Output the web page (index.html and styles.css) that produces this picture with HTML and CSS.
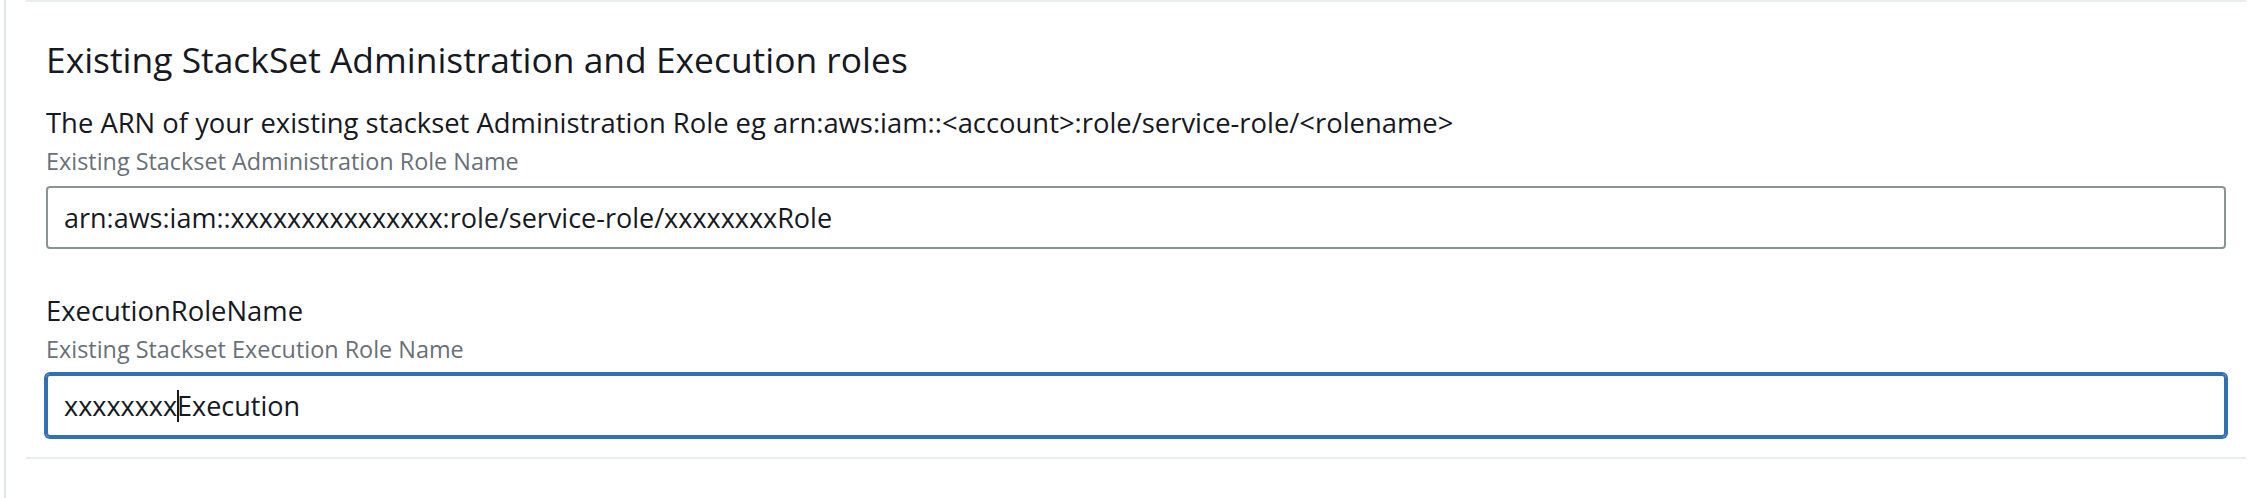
FILE: index.html
```html
<!DOCTYPE html>
<html lang="en">
<head>
<meta charset="utf-8">
<title>Existing StackSet Administration and Execution roles</title>
<link rel="stylesheet" href="styles.css">
</head>
<body>
<div class="page">
  <section class="panel">
    <h2 class="panel-title">Existing StackSet Administration and Execution roles</h2>
    <div class="field">
      <div class="field-label">The ARN of your existing stackset Administration Role eg arn:aws:iam::&lt;account&gt;:role/service-role/&lt;rolename&gt;</div>
      <div class="field-desc">Existing Stackset Administration Role Name</div>
      <div class="text-input">arn:aws:iam::xxxxxxxxxxxxxxx:role/service-role/xxxxxxxxRole</div>
    </div>
    <div class="field field-next">
      <div class="field-label">ExecutionRoleName</div>
      <div class="field-desc">Existing Stackset Execution Role Name</div>
      <div class="text-input is-focused">xxxxxxxx<span class="caret"></span>Execution</div>
    </div>
  </section>
</div>
</body>
</html>
```
FILE: styles.css
```css
html, body {
  margin: 0;
  padding: 0;
  background: #ffffff;
}

body {
  font-family: "Open Sans", "Noto Sans", sans-serif;
  color: #16191f;
}

.page {
  margin-left: 4px;
  border-left: 2px solid #e1e4e6;
  min-height: 498px;
  box-sizing: border-box;
  padding-left: 20px;
  padding-right: 16px;
}

.panel {
  border-top: 2px solid #eaeded;
  border-bottom: 2px solid #eaeded;
  padding: 35px 20px 20px 20px;
}

.panel-title {
  margin: 0;
  font-size: 35.4px;
  line-height: 44px;
  font-weight: 400;
  color: #16191f;
}

.field {
  margin-top: 25px;
  display: flex;
  flex-direction: column;
}

.field-next {
  margin-top: 45px;
}

.field-label {
  font-size: 27.4px;
  line-height: 34px;
  color: #16191f;
  white-space: nowrap;
}

.field-desc {
  margin-top: 7px;
  font-size: 23.4px;
  line-height: 28px;
  color: #687078;
  white-space: nowrap;
}

.text-input {
  margin-top: 11px;
  box-sizing: border-box;
  height: 63px;
  border: 2px solid #879596;
  border-radius: 4px;
  padding: 0 16px;
  display: flex;
  align-items: center;
  font-size: 27px;
  color: #16191f;
  white-space: pre;
}

.text-input.is-focused {
  border-color: #3170b5;
  box-shadow: 0 0 0 2px #3170b5;
}

.caret {
  display: inline-block;
  width: 0;
  height: 32px;
  border-left: 2px solid #16191f;
  margin-right: -2px;
}
```
